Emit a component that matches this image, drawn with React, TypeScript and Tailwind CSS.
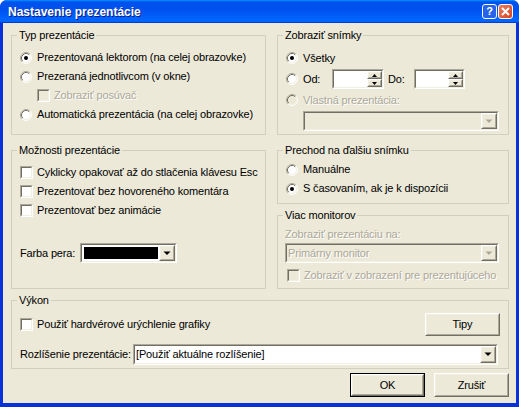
import React from "react";

type Kids = { children?: React.ReactNode; className?: string };

const dis = "text-[#aca899] [text-shadow:1px_1px_0_#fff]";

function Radio({ checked = false, disabled = false }: { checked?: boolean; disabled?: boolean }) {
  return (
    <svg width="12" height="12" viewBox="0 0 12 12" className="shrink-0">
      <circle cx="6" cy="6" r="5" fill={disabled ? "#ece9d8" : "#fff"} />
      <path d="M2.11 9.89A5.5 5.5 0 0 1 9.89 2.11" fill="none" stroke="#aca899" />
      <path d="M9.89 2.11A5.5 5.5 0 0 1 2.11 9.89" fill="none" stroke="#fff" />
      <path d="M2.82 9.18A4.5 4.5 0 0 1 9.18 2.82" fill="none" stroke="#716f64" />
      <path d="M9.18 2.82A4.5 4.5 0 0 1 2.82 9.18" fill="none" stroke="#f1efe2" />
      {checked && <circle cx="6" cy="6" r="2" fill={disabled ? "#aca899" : "#000"} />}
    </svg>
  );
}

function Check({ disabled = false }: { disabled?: boolean }) {
  return (
    <span className="block w-[13px] h-[13px] shrink-0 border border-t-[#aca899] border-l-[#aca899] border-b-white border-r-white">
      <span
        className={`block h-full border border-t-[#716f64] border-l-[#716f64] border-b-[#f1efe2] border-r-[#f1efe2] ${
          disabled ? "bg-[#ece9d8]" : "bg-white"
        }`}
      />
    </span>
  );
}

function Sunken({ children, className = "", disabled = false }: Kids & { disabled?: boolean }) {
  return (
    <div className={`border border-t-[#aca899] border-l-[#aca899] border-b-white border-r-white ${className}`}>
      <div
        className={`flex h-full border border-t-[#716f64] border-l-[#716f64] border-b-[#f1efe2] border-r-[#f1efe2] ${
          disabled ? "bg-[#ece9d8]" : "bg-white"
        }`}
      >
        {children}
      </div>
    </div>
  );
}

function Raised({ children, className = "" }: Kids) {
  return (
    <div className={`border border-t-white border-l-white border-b-[#716f64] border-r-[#716f64] bg-[#ece9d8] ${className}`}>
      <div className="flex h-full items-center justify-center border border-t-[#f1efe2] border-l-[#f1efe2] border-b-[#aca899] border-r-[#aca899]">
        {children}
      </div>
    </div>
  );
}

function Down({ disabled = false }: { disabled?: boolean }) {
  return (
    <svg width="8" height="5" viewBox="0 0 8 5">
      {disabled && <path d="M2 1h5L4.5 3.5z" fill="#fff" />}
      <path d="M0.5 0.5h7L4 4z" fill={disabled ? "#aca899" : "#000"} />
    </svg>
  );
}

function Combo({ className = "", disabled = false, children }: Kids & { disabled?: boolean }) {
  return (
    <Sunken className={className} disabled={disabled}>
      <div className="flex-1 flex items-center pl-[1px] overflow-hidden whitespace-nowrap">{children}</div>
      <Raised className="w-[16px] h-full">
        <Down disabled={disabled} />
      </Raised>
    </Sunken>
  );
}

function Spin({ className = "" }: Kids) {
  return (
    <Sunken className={`h-[20px] shrink-0 ${className}`}>
      <div className="flex-1" />
      <div className="flex flex-col w-[15px]">
        <Raised className="h-[8px]">
          <svg width="5" height="3" viewBox="0 0 5 3">
            <path d="M0 3h5L2.5 0z" fill="#000" />
          </svg>
        </Raised>
        <Raised className="h-[8px]">
          <svg width="5" height="3" viewBox="0 0 5 3">
            <path d="M0 0h5L2.5 3z" fill="#000" />
          </svg>
        </Raised>
      </div>
    </Sunken>
  );
}

function Group({ title, className = "", children }: Kids & { title: string }) {
  return (
    <fieldset className={`border border-[#d0d0bf] min-w-0 ${className}`}>
      <legend className="ml-[5px] px-[2px] leading-[13px]">{title}</legend>
      {children}
    </fieldset>
  );
}

function Option({ children, checked, disabled }: Kids & { checked?: boolean; disabled?: boolean }) {
  return (
    <div className="flex items-center gap-[5px] h-[19px] whitespace-nowrap">
      <Radio checked={checked} disabled={disabled} />
      <span className={disabled ? dis : ""}>{children}</span>
    </div>
  );
}

function Box({ children, disabled, className = "" }: Kids & { disabled?: boolean }) {
  return (
    <div className={`flex items-center gap-[4px] h-[19px] whitespace-nowrap ${className}`}>
      <Check disabled={disabled} />
      <span className={disabled ? dis : ""}>{children}</span>
    </div>
  );
}

function Button({ children, def = false, className = "" }: Kids & { def?: boolean }) {
  const btn = <Raised className="h-full">{children}</Raised>;
  return def ? (
    <div className={`border border-black ${className}`}>{btn}</div>
  ) : (
    <div className={className}>{btn}</div>
  );
}

export default function App() {
  return (
    <div className="w-[519px] h-[407px] bg-white text-[11px] tracking-[-0.15px] text-black font-['Liberation_Sans',Arial,sans-serif]">
      <div className="flex flex-col h-full rounded-t-[7px] overflow-hidden bg-[#0831d9]">
        <div className="h-[23px] shrink-0 flex items-center pl-[8px] pr-[6px] bg-[linear-gradient(180deg,#0997ff,#0053ee_8%,#0050ee_40%,#0066ff_88%,#0066ff_93%,#005bff_95%,#003dd7_96%,#003dd7)]">
          <span className="flex-1 text-white font-bold text-[12px] tracking-normal [text-shadow:1px_1px_#0a1883]">
            Nastavenie prezentácie
          </span>
          <div className="flex gap-[1px]">
            <div className="w-[15px] h-[15px] rounded-[3px] border border-white bg-[#2663e8] flex items-center justify-center text-white font-bold text-[11px] leading-none">
              ?
            </div>
            <div className="w-[15px] h-[15px] rounded-[3px] border border-white bg-[linear-gradient(135deg,#e97e5f,#d8431f)] flex items-center justify-center">
              <svg width="9" height="9" viewBox="0 0 9 9">
                <path d="M1 1l7 7M8 1L1 8" stroke="#fff" strokeWidth="2" />
              </svg>
            </div>
          </div>
        </div>

        <div className="flex-1 mx-[3px] mb-[4px] bg-[#ece9d8] pt-[6px] pl-[8px] pr-[7px]">
          <div className="grid grid-cols-[255px_232px] gap-x-[11px]">
            <div className="flex flex-col">
              <Group title="Typ prezentácie" className="h-[106px]">
                <div className="pt-[6px] pl-[8px]">
                  <Option checked>Prezentovaná lektorom (na celej obrazovke)</Option>
                  <Option>Prezeraná jednotlivcom (v okne)</Option>
                  <Box disabled className="ml-[17px]">
                    Zobraziť posúvač
                  </Box>
                  <Option>Automatická prezentácia (na celej obrazovke)</Option>
                </div>
              </Group>
              <Group title="Možnosti prezentácie" className="mt-[9px] h-[145px]">
                <div className="pt-[6px] pl-[8px]">
                  <Box>Cyklicky opakovať až do stlačenia klávesu Esc</Box>
                  <Box>Prezentovať bez hovoreného komentára</Box>
                  <Box>Prezentovať bez animácie</Box>
                  <div className="flex items-center mt-[23px] h-[20px]">
                    <span className="w-[60px] shrink-0">Farba pera:</span>
                    <Sunken className="w-[97px] h-[20px]">
                      <div className="flex-1 m-[2px] mr-[1px] bg-black" />
                      <Raised className="w-[16px] h-full">
                        <Down />
                      </Raised>
                    </Sunken>
                  </div>
                </div>
              </Group>
            </div>

            <div className="flex flex-col">
              <Group title="Zobraziť snímky" className="h-[106px]">
                <div className="pt-[6px] pl-[8px]">
                  <div className="flex items-center gap-[5px] h-[20px]">
                    <Radio checked />
                    <span>Všetky</span>
                  </div>
                  <div className="flex items-center h-[22px]">
                    <Radio />
                    <span className="ml-[5px] w-[29px] shrink-0">Od:</span>
                    <Spin className="w-[52px]" />
                    <span className="ml-[4px] w-[26px] shrink-0">Do:</span>
                    <Spin className="w-[51px]" />
                  </div>
                  <div className="flex items-center gap-[5px] h-[20px]">
                    <Radio disabled />
                    <span className={dis}>Vlastná prezentácia:</span>
                  </div>
                  <Combo disabled className="ml-[17px] mt-[1px] w-[196px] h-[20px]" />
                </div>
              </Group>
              <Group title="Prechod na ďalšiu snímku" className="mt-[9px] h-[60px]">
                <div className="pt-[3px] pl-[8px]">
                  <Option>Manuálne</Option>
                  <Option checked>S časovaním, ak je k dispozícii</Option>
                </div>
              </Group>
              <Group title="Viac monitorov" className="mt-[5px] h-[80px]">
                <div className="pt-[5px] pl-[7px]">
                  <div className={`h-[14px] flex items-center ${dis}`}>Zobraziť prezentáciu na:</div>
                  <Combo disabled className="mt-[2px] w-[214px] h-[20px]">
                    <span className={dis}>Primárny monitor</span>
                  </Combo>
                  <Box disabled className="mt-[3px] ml-[2px] h-[17px]">
                    Zobraziť v zobrazení pre prezentujúceho
                  </Box>
                </div>
              </Group>
            </div>
          </div>

          <Group title="Výkon" className="mt-[5px] h-[75px]">
            <div className="pt-[5px] pl-[8px] pr-[8px]">
              <div className="flex items-center h-[24px]">
                <Box className="flex-1">Použiť hardvérové urýchlenie grafiky</Box>
                <Button className="w-[75px] h-[23px] shrink-0">Tipy</Button>
              </div>
              <div className="flex items-center mt-[8px] h-[21px]">
                <span className="w-[113px] shrink-0 whitespace-nowrap">Rozlíšenie prezentácie:</span>
                <Combo className="w-[365px] h-[21px] shrink-0">
                  <span>[Použiť aktuálne rozlíšenie]</span>
                </Combo>
              </div>
            </div>
          </Group>

          <div className="flex justify-end gap-[9px] mt-[4px]">
            <Button def className="w-[75px] h-[24px]">
              OK
            </Button>
            <Button className="w-[75px] h-[24px]">Zrušiť</Button>
          </div>
        </div>
      </div>
    </div>
  );
}
